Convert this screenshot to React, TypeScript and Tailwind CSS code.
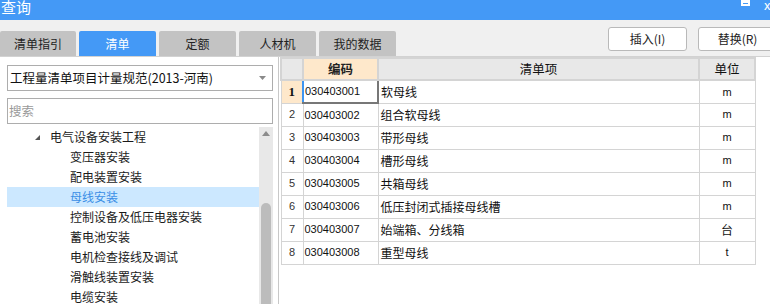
import React from "react";

const cjk = { fontFamily: '"Noto Sans CJK SC", "Liberation Sans", sans-serif' };
const num = { fontFamily: '"Liberation Sans", "Noto Sans CJK SC", sans-serif' };

const tabs = ["清单指引", "清单", "定额", "人材机", "我的数据"];

const tree = [
    { label: "电气设备安装工程", level: 0 },
    { label: "变压器安装", level: 1 },
    { label: "配电装置安装", level: 1 },
    { label: "母线安装", level: 1, selected: true },
    { label: "控制设备及低压电器安装", level: 1 },
    { label: "蓄电池安装", level: 1 },
    { label: "电机检查接线及调试", level: 1 },
    { label: "滑触线装置安装", level: 1 },
    { label: "电缆安装", level: 1 },
];

const rows = [
    ["030403001", "软母线", "m"],
    ["030403002", "组合软母线", "m"],
    ["030403003", "带形母线", "m"],
    ["030403004", "槽形母线", "m"],
    ["030403005", "共箱母线", "m"],
    ["030403006", "低压封闭式插接母线槽", "m"],
    ["030403007", "始端箱、分线箱", "台"],
    ["030403008", "重型母线", "t"],
];

export default function App() {
    return (
        <div className="w-[770px] h-[304px] overflow-hidden bg-[#f0f0f0] flex flex-col" style={cjk}>
            {/* 标题栏 */}
            <div className="h-[20px] shrink-0 bg-[#4499f6] flex items-start text-white">
                <div className="text-[15px] leading-[14px] pl-[1px]">查询</div>
                <div className="ml-auto flex items-start">
                    <div className="w-[9px] h-[6px] border-[2px] border-white border-t-[3px] mr-[14px]" />
                    <div className="text-[13px] leading-[10px] w-[6px] overflow-hidden">x</div>
                </div>
            </div>

            {/* 页签 + 按钮 */}
            <div className="h-[36px] shrink-0 flex items-end">
                <div className="flex items-end gap-[3px]">
                    {tabs.map((t, i) => (
                        <div
                            key={t}
                            className={
                                "h-[25px] flex items-center justify-center text-[12px] rounded-t-[2px] " +
                                (i === 0 ? "w-[76px] " : "w-[77px] ") +
                                (i === 1 ? "bg-[#4499f6] text-white" : "bg-[#c3c3c3] text-[#222]")
                            }
                        >
                            {t}
                        </div>
                    ))}
                </div>
                <div className="self-start mt-[7px] ml-[212px] flex gap-[11px]">
                    <button className="w-[79px] h-[24px] bg-white border border-[#b9b9b9] rounded-[3px] text-[12px] text-[#222]">
                        插入(I)
                    </button>
                    <button className="w-[79px] h-[24px] bg-white border border-[#b9b9b9] rounded-[3px] text-[12px] text-[#222]">
                        替换(R)
                    </button>
                </div>
            </div>

            {/* 主区域 */}
            <div className="flex-1 flex border-t border-[#d2d2d2] bg-white min-h-0">
                {/* 左侧 */}
                <div className="w-[279px] shrink-0 flex flex-col pl-[7px] pr-[5px] pt-[8px] border-r border-[#c8c8c8]">
                    <div className="h-[26px] border border-[#adadad] flex items-center pl-[2px] pr-[6px] text-[12.5px] text-[#111]">
                        <span>工程量清单项目计量规范(2013-河南)</span>
                        <svg className="ml-auto" width="7" height="4" viewBox="0 0 7 4">
                            <path d="M0 0 L7 0 L3.5 4 Z" fill="#8a8a8a" />
                        </svg>
                    </div>
                    <div className="h-[26px] mt-[7px] border border-[#adadad] flex items-center pl-[1px] text-[12.5px] text-[#9a9a9a]">
                        搜索
                    </div>
                    <div className="flex-1 flex mt-[3px] min-h-0">
                        <div className="flex-1 flex flex-col">
                            {tree.map((n) => (
                                <div
                                    key={n.label}
                                    className={
                                        "h-[20px] shrink-0 flex items-center text-[12px] " +
                                        (n.selected ? "bg-[#cce8ff] text-[#3a8ee6]" : "text-[#1a1a1a]")
                                    }
                                >
                                    {n.level === 0 ? (
                                        <>
                                            <svg className="ml-[28px] mr-[10px]" width="5" height="5" viewBox="0 0 5 5">
                                                <path d="M5 0 L5 5 L0 5 Z" fill="#555" />
                                            </svg>
                                            <span>{n.label}</span>
                                        </>
                                    ) : (
                                        <span className="pl-[63px]">{n.label}</span>
                                    )}
                                </div>
                            ))}
                        </div>
                        <div className="w-[14px] shrink-0 bg-[#e8e8e8] flex flex-col items-center">
                            <svg className="mt-[4px]" width="8" height="5" viewBox="0 0 8 5">
                                <path d="M0 5 L4 0 L8 5 Z" fill="#8c8c8c" />
                            </svg>
                            <div className="mt-[67px] w-[10px] flex-1 bg-[#bcbcbc] rounded-t-[5px]" />
                        </div>
                    </div>
                </div>

                {/* 右侧表格 */}
                <div className="flex-1 pl-[1px]">
                    <table className="border-collapse table-fixed border-l border-[#cfcfcf]" style={{ width: 475 }}>
                        <colgroup>
                            <col style={{ width: 22 }} />
                            <col style={{ width: 75 }} />
                            <col style={{ width: 321 }} />
                            <col style={{ width: 56 }} />
                        </colgroup>
                        <thead>
                            <tr className="h-[22px] text-[12.5px]">
                                <th className="bg-[#e8e8e8] border-2 border-[#d4d4d4]" />
                                <th className="bg-[#fee8cb] border-2 border-[#d4d4d4] font-bold text-[#222]">编码</th>
                                <th className="bg-[#e8e8e8] border-2 border-[#d4d4d4] font-normal text-[#111]">清单项</th>
                                <th className="bg-[#e8e8e8] border-2 border-[#d4d4d4] font-normal text-[#111]">单位</th>
                            </tr>
                        </thead>
                        <tbody>
                            {rows.map((r, i) => (
                                <tr key={r[0]} className="h-[23px]">
                                    <td
                                        className={
                                            "border border-[#d4d4d4] text-center text-[11px] " +
                                            (i === 0 ? "bg-[#fee8cb] font-bold text-[#111]" : "text-[#333]")
                                        }
                                        style={i === 0 ? { fontFamily: '"Liberation Serif", serif', fontSize: 13 } : num}
                                    >
                                        {i + 1}
                                    </td>
                                    <td
                                        className={
                                            "text-[11px] text-[#111] pl-[1px] " +
                                            (i === 0
                                                ? "border-l-2 border-l-[#3d95f2] border-r-2 border-r-[#777] border-b-2 border-b-[#777] border-t border-t-[#d4d4d4]"
                                                : "border border-[#d4d4d4]")
                                        }
                                        style={num}
                                    >
                                        {r[0]}
                                    </td>
                                    <td className="border border-[#d4d4d4] text-[12px] text-[#111] pl-[2px]">{r[1]}</td>
                                    <td
                                        className={
                                            "border border-[#d4d4d4] text-center text-[#111] " +
                                            (r[2] === "台" ? "text-[12px]" : "text-[11px]")
                                        }
                                        style={r[2] === "台" ? cjk : num}
                                    >
                                        {r[2]}
                                    </td>
                                </tr>
                            ))}
                        </tbody>
                    </table>
                </div>
            </div>
        </div>
    );
}
